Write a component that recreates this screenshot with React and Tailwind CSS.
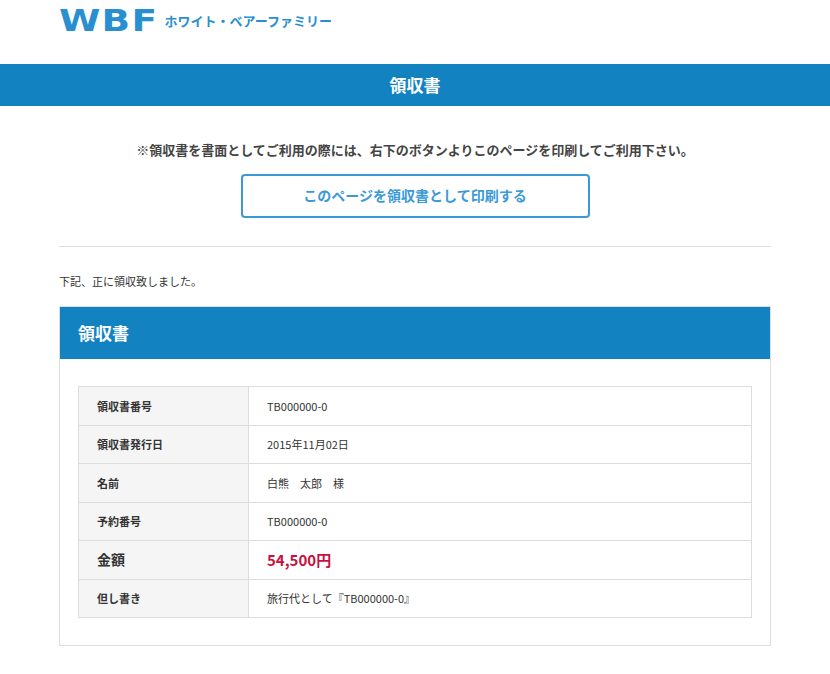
export default function App() {
  const rows = [
    ["領収書番号", "TB000000-0"],
    ["領収書発行日", "2015年11月02日"],
    ["名前", "白熊　太郎　様"],
    ["予約番号", "TB000000-0"],
    ["金額", "54,500円", true],
    ["但し書き", "旅行代として『TB000000-0』"],
  ];
  return (
    <div className="w-[830px] min-h-[674px] bg-white text-[#333]" style={{ fontFamily: '"Noto Sans CJK JP", "Liberation Sans", sans-serif' }}>
      <div className="h-[64px] px-[59px] flex items-start pt-[6px]">
        <div className="flex items-center gap-[10px]">
          <span className="text-[#2a8fd0] text-[30px] font-black leading-none tracking-[1px] scale-x-125 origin-left inline-block mr-[16px]" style={{ fontFamily: '"DejaVu Sans", sans-serif' }}>WBF</span>
          <span className="text-[#2a8fd0] text-[13px] font-bold">ホワイト・ベアーファミリー</span>
        </div>
      </div>
      <div className="h-[42px] bg-[#1282c0] flex items-center justify-center text-white text-[17px] font-bold">領収書</div>
      <div className="px-[59px]">
        <p className="text-center text-[13px] font-bold text-[#444] mt-[34px]">※領収書を書面としてご利用の際には、右下のボタンよりこのページを印刷してご利用下さい。</p>
        <div className="flex justify-center mt-[14px]">
          <button className="w-[349px] h-[44px] border-2 border-[#3a9ad6] rounded-[4px] text-[#3a9ad6] text-[14px] font-bold">このページを領収書として印刷する</button>
        </div>
        <div className="border-t border-[#ddd] mt-[28px]" />
        <p className="text-[11px] mt-[26px]">下記、正に領収致しました。</p>
        <div className="mt-[17px] border border-[#ddd]">
          <div className="h-[52px] bg-[#1282c0] flex items-center px-[18px] text-white text-[17px] font-bold">領収書</div>
          <div className="p-[18px] pt-[27px] pb-[27px]">
            <table className="w-full border-collapse text-[11px]">
              <tbody>
                {rows.map(([k, v, big]) => (
                  <tr key={k} className="h-[38.5px]">
                    <td className={`w-[170px] border border-[#ddd] bg-[#f5f5f5] pl-[18px] font-bold ${big ? "text-[14px]" : ""}`}>{k}</td>
                    <td className={`border border-[#ddd] pl-[18px] ${big ? "text-[#c8103e] text-[15px] font-bold" : ""}`}>{v}</td>
                  </tr>
                ))}
              </tbody>
            </table>
          </div>
        </div>
      </div>
    </div>
  );
}
